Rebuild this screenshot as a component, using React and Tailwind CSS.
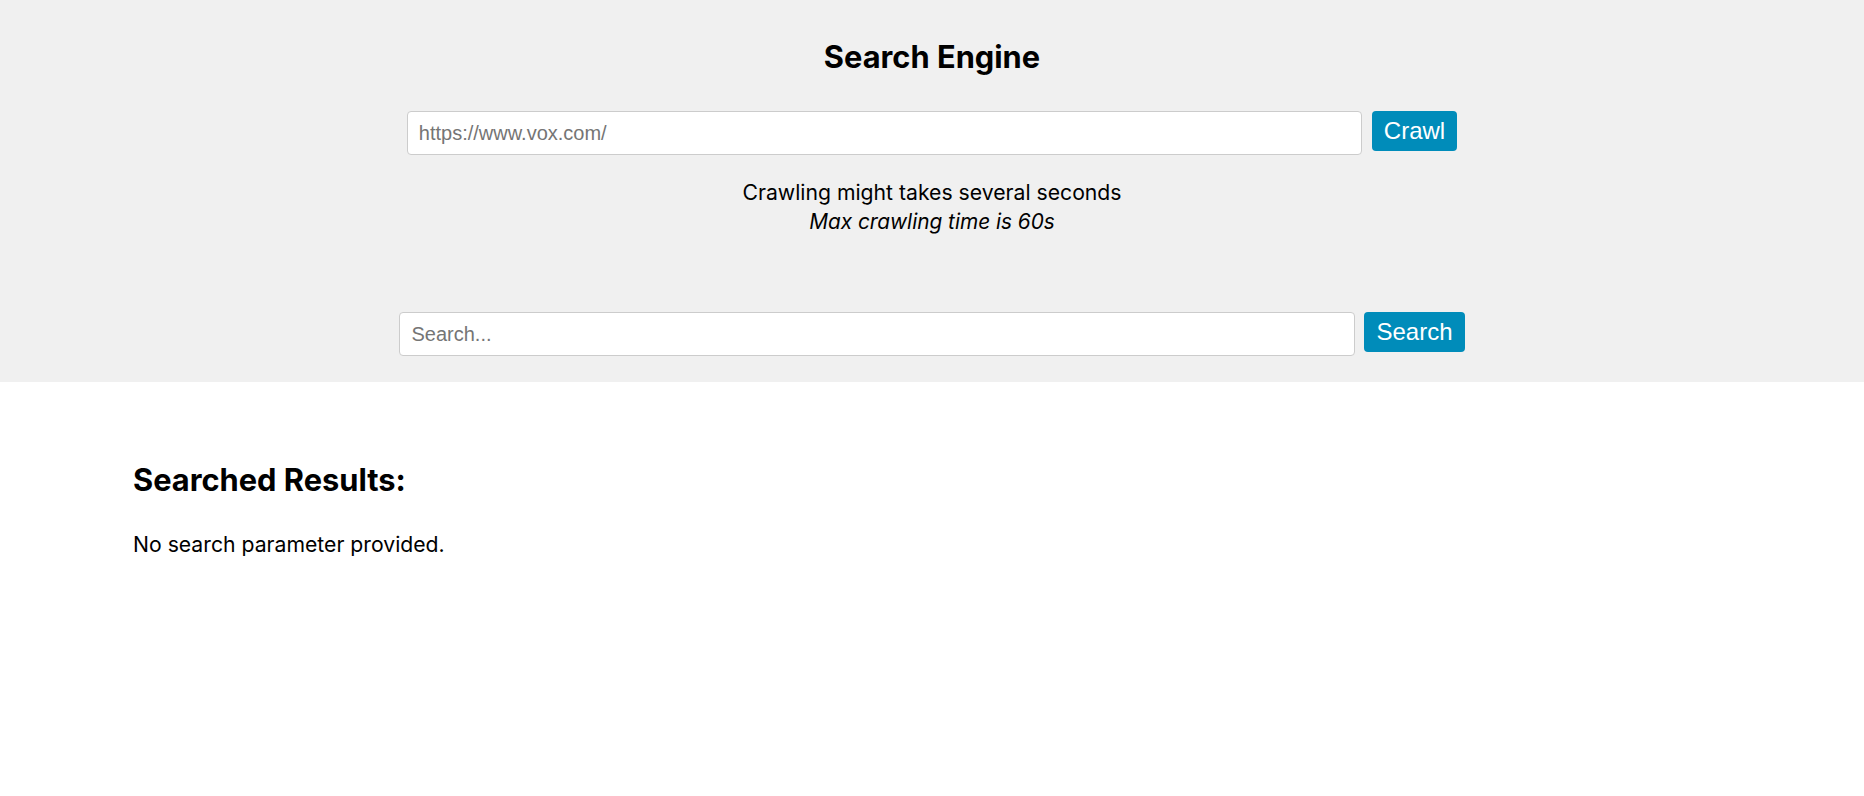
import React from "react";

export default function App() {
  return (
    <div className="min-h-[796px] bg-white text-black font-['Inter',sans-serif]">
      <header className="bg-[#f0f0f0] flex flex-col items-center pt-[39px] pb-[26px]">
        <h1 className="text-[30.8px] leading-[36px] font-bold">Search Engine</h1>

        <form
          className="mt-[36px] flex items-start gap-[10px]"
          onSubmit={(e) => e.preventDefault()}
        >
          <input
            type="text"
            placeholder="https://www.vox.com/"
            className="w-[955px] h-[44px] bg-white border border-[#cccccc] rounded-[4px] pl-[11px] pr-[10px] text-[20px] font-['Liberation_Sans',Arial,sans-serif] text-black placeholder:text-[#757575] outline-none"
          />
          <button
            type="submit"
            className="h-[40px] px-[12px] bg-[#008cba] text-white rounded-[4px] text-[24px] leading-[28px] font-['Liberation_Sans',Arial,sans-serif]"
          >
            Crawl
          </button>
        </form>

        <div className="mt-[22px] text-center text-[21.2px] leading-[30px]">
          <p>Crawling might takes several seconds</p>
          <p className="italic text-[20.8px]">Max crawling time is 60s</p>
        </div>

        <form
          className="mt-[75px] flex items-start gap-[9px]"
          onSubmit={(e) => e.preventDefault()}
        >
          <input
            type="text"
            placeholder="Search..."
            className="w-[956px] h-[44px] bg-white border border-[#cccccc] rounded-[4px] pl-[11px] pr-[10px] text-[20px] font-['Liberation_Sans',Arial,sans-serif] text-black placeholder:text-[#757575] outline-none"
          />
          <button
            type="submit"
            className="h-[40px] px-[12px] bg-[#008cba] text-white rounded-[4px] text-[24px] leading-[28px] font-['Liberation_Sans',Arial,sans-serif]"
          >
            Search
          </button>
        </form>
      </header>

      <main className="pl-[133px] pt-[80px]">
        <h2 className="text-[30.8px] leading-[36px] font-bold">Searched Results:</h2>
        <p className="mt-[31px] text-[21.2px] leading-[30px]">No search parameter provided.</p>
      </main>
    </div>
  );
}
